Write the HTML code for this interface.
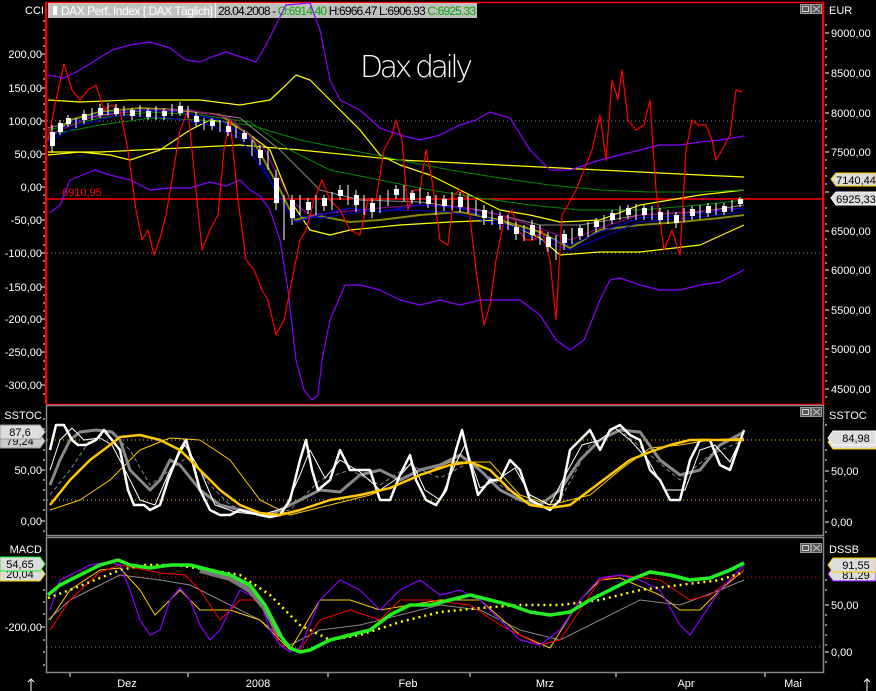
<!DOCTYPE html>
<html><head><meta charset="utf-8"><style>
html,body{margin:0;padding:0;background:#000;}
svg{display:block;font-family:"Liberation Sans",sans-serif;}
</style></head><body>
<svg width="876" height="691" viewBox="0 0 876 691" xmlns="http://www.w3.org/2000/svg">
<rect width="876" height="691" fill="#000"/>
<rect x="46.5" y="2.5" width="777" height="402" fill="none" stroke="#f00" stroke-width="1.5"/>
<rect x="46.5" y="405.5" width="777" height="130" fill="none" stroke="#888" stroke-width="1.5"/>
<rect x="46.5" y="537.5" width="777" height="135" fill="none" stroke="#888" stroke-width="1.5"/>
<line x1="46" y1="2" x2="46" y2="404" stroke="#f00" stroke-width="2"/>
<line x1="823" y1="2" x2="823" y2="404" stroke="#f00" stroke-width="2"/>
<rect x="48" y="3" width="429" height="15" fill="#c0c0c0"/>
<rect x="53" y="6" width="4" height="9" fill="#fff"/>
<text x="61" y="15" font-size="12" fill="#fff" textLength="152">DAX Perf. Index [.DAX  Täglich]</text>
<line x1="215.5" y1="3" x2="215.5" y2="18" stroke="#eee"/>
<text x="218" y="15" font-size="12" fill="#000" textLength="258">28.04.2008 - <tspan fill="#0a0">O:6914.40</tspan> H:6966.47 L:6906.93 <tspan fill="#0a0">C:6925.33</tspan></text>
<text x="25" y="14" font-size="11" fill="#fff">CCI</text>
<text x="829" y="14" font-size="11" fill="#fff">EUR</text>
<text x="360" y="77" font-size="30" fill="#fff" font-family="DejaVu Sans" font-weight="200" textLength="113">Dax daily</text>
<g fill="#555" stroke="#999">
<rect x="800.5" y="4.5" width="10" height="9"/><rect x="811.5" y="4.5" width="10" height="9"/>
<rect x="800.5" y="407.5" width="10" height="9"/><rect x="811.5" y="407.5" width="10" height="9"/>
<rect x="800.5" y="543.5" width="10" height="9"/><rect x="811.5" y="543.5" width="10" height="9"/>
</g>
<g stroke="#ccc" fill="none">
<rect x="802.5" y="6.5" width="6" height="5"/><path d="M813 6l7 6M820 6l-7 6"/>
<rect x="802.5" y="409.5" width="6" height="5"/><path d="M813 409l7 6M820 409l-7 6"/>
<rect x="802.5" y="545.5" width="6" height="5"/><path d="M813 545l7 6M820 545l-7 6"/>
</g>
<g font-size="11" fill="#fff" text-anchor="end">
<text x="42" y="58">200,00</text><text x="42" y="92">150,00</text><text x="42" y="125">100,00</text>
<text x="42" y="158">50,00</text><text x="42" y="191">0,00</text><text x="42" y="224">-50,00</text>
<text x="42" y="257">-100,00</text><text x="42" y="291">-150,00</text><text x="42" y="323">-200,00</text>
<text x="42" y="356">-250,00</text><text x="42" y="389">-300,00</text>
<text x="42" y="474">50,00</text><text x="42" y="525">0,00</text>
<text x="42" y="631">-200,00</text>
<text x="42" y="419">SSTOC</text><text x="42" y="553">MACD</text>
</g>
<g font-size="11" fill="#fff">
<text x="831" y="37">9000,00</text><text x="831" y="77">8500,00</text><text x="831" y="117">8000,00</text>
<text x="831" y="156">7500,00</text><text x="831" y="235">6500,00</text><text x="831" y="274">6000,00</text>
<text x="831" y="314">5500,00</text><text x="831" y="353">5000,00</text><text x="831" y="393">4500,00</text>
<text x="829" y="419">SSTOC</text><text x="831" y="475">50,00</text><text x="831" y="526">0,00</text>
<text x="829" y="553">DSSB</text><text x="831" y="609">50,00</text><text x="831" y="656">0,00</text>
</g>
<g stroke="#fff" stroke-width="1">
<path d="M43 21h2M43 30h2M43 38h2M43 46h2M41 54h4M43 62h2M43 71h2M43 79h2M41 88h4M43 96h2M43 104h2M43 112h2M41 121h4M43 129h2M43 137h2M43 146h2M41 154h4M43 162h2M43 170h2M43 179h2M41 187h4M43 195h2M43 203h2M43 212h2M41 220h4M43 228h2M43 236h2M43 245h2M41 253h4M43 261h2M43 270h2M43 278h2M41 287h4M43 295h2M43 303h2M43 311h2M41 319h4M43 328h2M43 336h2M43 344h2M41 352h4M43 361h2M43 369h2M43 377h2M41 385h4M43 394h2"/>
<path d="M825 25h2M825 33h4M825 41h2M825 49h2M825 57h2M825 65h2M825 73h4M825 81h2M825 89h2M825 97h2M825 105h2M825 113h4M825 121h2M825 129h2M825 137h2M825 145h2M825 152h4M825 160h2M825 168h2M825 176h2M825 184h2M825 192h4M825 208h2M825 216h2M825 224h2M825 231h4M825 239h2M825 247h2M825 255h2M825 263h2M825 270h4M825 278h2M825 286h2M825 294h2M825 302h2M825 310h4M825 318h2M825 326h2M825 334h2M825 342h2M825 349h4M825 357h2M825 365h2M825 373h2M825 381h2M825 389h4M825 397h2"/>
<path d="M43 419h2M43 429h2M43 450h2M41 470h4M43 460h2M43 480h2M43 490h2M43 500h2M43 510h2M41 521h4M43 531h2M43 590h2M43 602h2M43 614h2M41 627h4M43 640h2M43 652h2M43 665h2"/>
<path d="M825 425h2M825 450h2M825 460h2M825 471h4M825 481h2M825 491h2M825 501h2M825 511h2M825 522h4M825 532h2M825 580h2M825 590h2M825 605h4M825 615h2M825 625h2M825 635h2M825 645h2M825 652h4M825 662h2"/>
<path d="M70 673v4M188 673v4M328 673v4M470 673v4M616 673v4M765 673v4"/>
</g>
<g stroke-dasharray="1,3" stroke-width="1">
<line x1="47" y1="121" x2="822" y2="121" stroke="#888"/>
<line x1="47" y1="253" x2="822" y2="253" stroke="#888"/>
<line x1="47" y1="440" x2="822" y2="440" stroke="#fc0"/>
<line x1="47" y1="500" x2="822" y2="500" stroke="#fc0"/>
<line x1="47" y1="577" x2="822" y2="577" stroke="#c00"/>
<line x1="47" y1="647" x2="822" y2="647" stroke="#888"/>
</g>
<line x1="46" y1="199" x2="823" y2="199" stroke="#f00" stroke-width="1.5"/>
<text x="62" y="196" font-size="11" fill="#f00">6910,95</text>
<g fill="none" stroke-linejoin="round">
<polyline stroke="#ff0" stroke-width="1.2" points="48,152 100,152 240,145 300,150 400,160 500,165 600,170 700,175 744,177"/>
<polyline stroke="#ff0" stroke-width="1.2" points="48,100 80,102 130,100 200,100 240,105 270,100 286,85 296,75 310,80 330,100 360,130 380,155 400,165 430,175 470,195 500,210 530,215 560,222 600,220 640,205 700,195 744,190"/>
<polyline stroke="#ff0" stroke-width="1.2" points="48,155 80,152 110,155 130,160 160,150 190,130 210,120 230,123 250,135 270,150 290,200 310,230 330,235 350,230 400,225 450,222 500,220 540,238 560,255 600,252 640,252 700,245 744,225"/>
<polyline stroke="#080" stroke-width="1" points="48,135 100,125 150,118 200,120 250,125 300,140 350,150 400,160 450,170 500,178 550,185 600,190 650,192 700,192 744,190"/>
<polyline stroke="#080" stroke-width="1" points="48,130 100,118 150,112 200,115 250,122 290,150 330,170 380,180 430,190 480,198 530,205 580,210 640,210 700,205 744,200"/>
<polyline stroke="#888" stroke-width="1" points="48,128 100,115 150,110 200,112 240,118 280,150 320,190 360,200 420,202 480,210 540,225 580,225 640,215 700,212 744,205"/>
<polyline stroke="#880" stroke-width="2" points="48,140 70,120 100,112 140,108 180,110 220,115 250,135 275,180 295,220 315,215 350,222 380,220 420,215 460,212 500,220 540,232 570,248 600,230 640,225 680,222 720,218 744,215"/>
<polyline stroke="#808" stroke-width="1.2" points="48,135 90,118 140,110 190,110 230,118 265,150 290,200 310,215 340,212 380,208 420,205 460,207 500,215 540,228 570,240 600,228 640,215 690,212 744,208"/>
<polyline stroke="#00c" stroke-width="1.2" points="48,140 70,123 100,113 140,110 180,112 220,120 250,140 275,190 295,222 320,215 350,208 380,212 420,205 460,208 500,222 540,236 570,245 600,232 640,218 690,215 744,208"/>
<polyline stroke="#00c" stroke-width="1" points="48,142 80,125 120,115 170,118 210,125 240,138 270,180 290,215 320,218 360,212 400,210 450,212 500,225 540,240 570,250 600,238 640,222 690,218 744,212"/>
<polyline stroke="#80f" stroke-width="1.2" points="48,75 64,78 80,70 96,60 112,50 130,45 150,42 170,48 186,60 200,62 212,57 226,52 244,58 256,62 266,45 276,25 286,5 310,3 320,30 330,80 340,100 360,110 380,128 400,135 420,140 440,135 460,125 476,120 490,112 510,118 530,150 550,170 570,170 600,160 620,155 640,150 660,145 680,145 700,142 720,140 744,136"/>
<polyline stroke="#80f" stroke-width="1.2" points="50,213 60,205 70,180 95,170 110,175 130,180 150,190 170,188 190,188 210,182 226,186 240,180 250,190 260,196 270,210 280,240 288,290 296,360 304,390 312,400 318,395 322,360 330,320 345,285 360,285 380,290 400,300 420,305 440,300 460,305 480,300 500,300 520,300 540,315 556,340 570,350 584,340 592,320 600,300 610,280 620,278 640,285 660,290 680,290 700,285 720,282 744,270"/>
<polyline stroke="#f00" stroke-width="1.2" points="48,140 55,105 64,64 72,90 80,100 88,90 96,85 104,110 112,105 120,110 128,150 136,210 142,240 148,230 154,255 160,238 166,215 172,180 180,130 188,110 195,180 202,250 210,230 218,215 224,150 230,120 238,200 246,260 254,270 262,290 268,300 276,335 284,320 292,280 300,240 306,230 314,200 322,180 330,200 340,210 350,230 360,235 368,200 376,200 384,150 392,135 396,120 402,140 408,210 414,190 420,190 426,150 432,180 440,240 448,245 454,195 460,190 468,200 476,270 484,325 490,305 496,260 504,220 512,210 518,230 526,240 534,240 542,230 550,260 556,320 562,215 568,205 576,190 584,170 592,150 600,115 606,160 612,80 618,100 622,70 628,120 636,130 644,125 650,100 656,190 664,250 672,230 680,255 686,150 692,120 698,125 706,125 712,140 716,160 722,150 730,135 736,90 742,92"/>
</g>
<g fill="#fff" stroke="#fff" stroke-width="1">
<path d="M52 125v28M60 120v15M68 115v12M76 118v10M84 110v14M92 108v12M100 104v14M108 103v12M116 104v12M124 106v10M132 108v12M140 105v12M148 108v12M156 106v14M164 108v12M172 104v12M180 102v14M188 106v12M196 112v14M204 118v12M212 118v12M220 120v12M228 122v14M236 126v12M244 130v12M252 140v16M260 145v20M268 150v20M276 170v40M284 195v45M292 195v30M300 195v20M308 198v16M316 195v20M324 195v16M332 192v18M340 185v15M348 185v20M356 190v22M364 195v20M372 198v20M380 195v18M388 190v16M396 185v14M404 185v16M412 190v14M420 188v16M428 192v16M436 195v20M444 195v16M452 192v18M460 192v20M468 195v18M476 200v15M484 205v20M492 210v15M500 212v18M508 215v15M516 222v18M524 225v16M532 220v20M540 225v20M548 232v20M556 235v25M564 230v20M572 228v16M580 225v15M588 222v15M596 218v14M604 215v14M612 210v14M620 206v14M628 205v14M636 204v16M644 205v15M652 206v14M660 208v16M668 210v14M676 212v16M684 208v14M692 206v14M700 205v14M708 203v14M716 203v12M724 203v12M732 200v12M740 197v10"/>
</g>
<g fill="#fff">
<rect x="50" y="132" width="5" height="14"/><rect x="58" y="123" width="5" height="9"/><rect x="66" y="118" width="5" height="6"/><rect x="82" y="114" width="5" height="6"/><rect x="98" y="108" width="5" height="7"/><rect x="114" y="108" width="5" height="6"/><rect x="130" y="110" width="5" height="6"/><rect x="146" y="111" width="5" height="6"/><rect x="162" y="111" width="5" height="5"/><rect x="178" y="106" width="5" height="7"/><rect x="194" y="116" width="5" height="6"/><rect x="210" y="121" width="5" height="5"/><rect x="226" y="126" width="5" height="6"/><rect x="242" y="133" width="5" height="6"/><rect x="258" y="150" width="5" height="8"/><rect x="274" y="178" width="5" height="25"/><rect x="290" y="200" width="5" height="18"/><rect x="306" y="202" width="5" height="8"/><rect x="322" y="198" width="5" height="8"/><rect x="338" y="190" width="5" height="6"/><rect x="354" y="195" width="5" height="10"/><rect x="370" y="203" width="5" height="9"/><rect x="394" y="189" width="5" height="6"/><rect x="410" y="193" width="5" height="7"/><rect x="426" y="196" width="5" height="8"/><rect x="442" y="199" width="5" height="7"/><rect x="458" y="197" width="5" height="10"/><rect x="482" y="210" width="5" height="8"/><rect x="498" y="216" width="5" height="8"/><rect x="514" y="227" width="5" height="7"/><rect x="530" y="225" width="5" height="10"/><rect x="546" y="237" width="5" height="10"/><rect x="562" y="234" width="5" height="9"/><rect x="578" y="228" width="5" height="8"/><rect x="594" y="221" width="5" height="6"/><rect x="610" y="213" width="5" height="7"/><rect x="626" y="208" width="5" height="7"/><rect x="642" y="208" width="5" height="7"/><rect x="658" y="212" width="5" height="8"/><rect x="674" y="215" width="5" height="8"/><rect x="690" y="209" width="5" height="7"/><rect x="706" y="206" width="5" height="7"/><rect x="722" y="206" width="5" height="6"/><rect x="738" y="199" width="5" height="5"/>
</g>
<g fill="none" stroke-linejoin="round">
<polyline stroke="#ffc800" stroke-width="1" points="50,510 80,500 110,480 140,450 170,438 200,440 230,460 260,500 290,515 330,505 370,495 410,480 450,462 490,462 520,495 550,505 590,495 620,470 650,448 680,445 710,440 744,438"/>
<polyline stroke="#888" stroke-width="1" stroke-dasharray="4,3" points="50,495 70,470 90,440 110,432 130,450 150,485 170,470 190,455 210,485 230,505 260,515 290,510 320,480 350,470 380,485 410,465 440,478 470,462 500,485 530,505 560,500 590,445 620,430 650,455 680,480 710,455 744,440"/>
<polyline stroke="#888" stroke-width="3" points="50,485 60,460 70,440 80,432 96,430 112,432 120,440 130,470 140,480 150,490 160,480 170,460 180,465 200,490 220,505 240,510 270,515 300,500 320,490 340,492 360,475 380,470 400,480 420,470 440,465 460,455 480,470 500,490 520,500 540,505 560,490 580,460 600,440 620,430 640,432 660,460 680,475 700,470 720,445 744,432"/>
<polyline stroke="#fff" stroke-width="1" points="50,470 60,440 72,428 84,440 100,438 112,445 125,470 140,500 155,505 170,470 185,445 200,470 215,505 235,512 260,515 285,508 300,475 310,450 325,478 340,460 360,472 380,490 398,478 412,462 425,490 440,500 455,465 465,445 480,488 500,478 515,468 530,495 550,505 568,470 582,445 600,440 615,428 630,440 648,460 665,490 685,490 700,450 715,445 730,462 744,432"/>
<polyline stroke="#fff" stroke-width="2.5" points="50,450 56,425 64,425 72,440 78,445 86,445 96,440 104,430 112,440 120,450 128,490 134,505 144,505 150,510 160,505 168,480 180,450 186,440 192,460 200,490 210,510 220,515 230,515 240,510 260,515 270,517 280,515 290,500 300,460 306,440 312,470 318,490 330,480 340,450 350,470 360,470 370,470 380,500 390,500 400,475 410,455 416,480 426,500 436,505 446,490 456,450 462,430 468,455 478,495 490,480 500,480 510,460 520,470 530,500 540,505 550,510 560,500 570,450 580,440 590,430 600,450 610,430 620,425 630,435 640,440 650,470 660,480 670,500 680,500 690,460 700,440 710,440 720,465 730,470 744,430"/>
<polyline stroke="#ffc800" stroke-width="2.5" points="50,505 70,480 90,460 110,445 120,437 140,435 160,440 180,450 200,470 220,490 240,505 260,513 280,515 300,510 330,500 360,495 390,488 420,475 450,465 470,462 490,470 510,490 530,505 550,508 570,505 590,490 610,475 630,460 650,452 670,445 690,440 710,440 744,440"/>
</g>
<g fill="none" stroke-linejoin="round">
<polyline stroke="#888" stroke-width="1" points="48,620 70,600 100,585 120,575 160,580 190,585 220,600 260,620 290,645 320,630 360,625 400,615 440,605 480,610 520,630 560,640 600,620 640,600 680,605 720,590 744,580"/>
<polyline stroke="#fc0" stroke-width="1" points="50,620 70,590 100,570 120,568 140,590 155,615 170,600 180,590 200,610 230,610 260,620 290,650 320,600 350,600 380,610 410,605 440,600 480,600 520,635 550,648 580,600 600,580 620,578 660,595 680,610 700,610 720,590 744,570"/>
<polyline stroke="#f00" stroke-width="1" points="50,630 70,600 100,572 120,565 160,573 185,575 200,590 220,620 240,600 260,600 280,645 300,650 320,620 350,610 380,620 400,600 430,600 470,605 500,625 540,645 560,640 580,610 600,580 620,575 660,580 690,600 710,595 744,570"/>
<polyline stroke="#80f" stroke-width="1.2" points="50,610 60,580 70,575 90,565 110,562 120,565 130,590 140,620 150,635 160,630 170,600 180,588 190,600 200,625 210,640 220,630 240,590 260,600 270,630 280,645 290,652 300,648 320,600 340,580 360,590 380,610 400,590 420,580 440,595 460,590 480,600 500,620 520,640 540,645 560,630 580,600 600,578 620,575 640,580 660,590 680,625 690,635 700,620 720,590 744,565"/>
<polyline stroke="#777" stroke-width="6" points="200,570 230,578 250,590 265,608 280,636"/>
<polyline stroke="#ff0" stroke-width="2.5" stroke-dasharray="2,4" points="48,598 70,590 95,580 120,570 145,565 175,565 210,570 240,575 270,595 300,625 330,640 360,635 400,622 440,612 480,608 520,605 560,605 600,600 640,590 680,585 720,580 744,572"/>
<polyline stroke="#2e2" stroke-width="3.5" points="48,595 60,585 80,575 100,565 118,560 130,565 150,568 170,565 190,565 210,570 230,575 250,585 265,605 280,635 290,648 300,652 310,650 330,640 350,635 370,630 390,615 410,605 430,605 450,600 470,595 490,600 510,605 530,612 550,615 570,612 590,600 610,590 630,580 650,572 670,575 690,580 710,578 730,570 744,563"/>
</g>
<g font-size="11" text-anchor="middle">
<path d="M831 179l5-6h40v13h-40z" fill="#ddd" stroke="#fc0"/><text x="856" y="184" fill="#000">7140,44</text>
<path d="M831 198l5-6h40v13h-40z" fill="#ddd" stroke="#fff"/><text x="856" y="203" fill="#000">6925,33</text>
<path d="M828 442l5-7h43v14h-43z" fill="#ddd" stroke="#fc0"/>
<path d="M828 438l5-7h43v14h-43z" fill="#ddd" stroke="#fff"/><text x="856" y="442" fill="#000">84,98</text>
<path d="M828 574l5-7h43v14h-43z" fill="#ddd" stroke="#80f"/><text x="856" y="579" fill="#000">81,29</text>
<path d="M828 565l5-7h43v14h-43z" fill="#ddd" stroke="#fc0"/><text x="856" y="569" fill="#000">91,55</text>
<path d="M0 434h40l5 7-5 7h-40z" fill="#ccc" stroke="#999"/><text x="20" y="445" fill="#000">79,24</text>
<path d="M0 425h40l5 7-5 7h-40z" fill="#ddd" stroke="#999"/><text x="20" y="436" fill="#000">87,6</text>
<path d="M0 567h40l5 7-5 7h-40z" fill="#ddd" stroke="#fc0"/><text x="20" y="578" fill="#000">20,04</text>
<path d="M0 557h40l5 7-5 7h-40z" fill="#ddd" stroke="#2e2"/><text x="20" y="568" fill="#000">54,65</text>
</g>
<g font-size="11" fill="#fff" text-anchor="middle">
<text x="127" y="687">Dez</text><text x="258" y="687">2008</text><text x="408" y="687">Feb</text>
<text x="545" y="687">Mrz</text><text x="686" y="687">Apr</text><text x="793" y="687">Mai</text>
</g>
<g stroke="#fff" fill="none"><path d="M31 691v-12M28 682l3-3 3 3M867 691v-12M864 682l3-3 3 3"/></g>
</svg>
</body></html>
